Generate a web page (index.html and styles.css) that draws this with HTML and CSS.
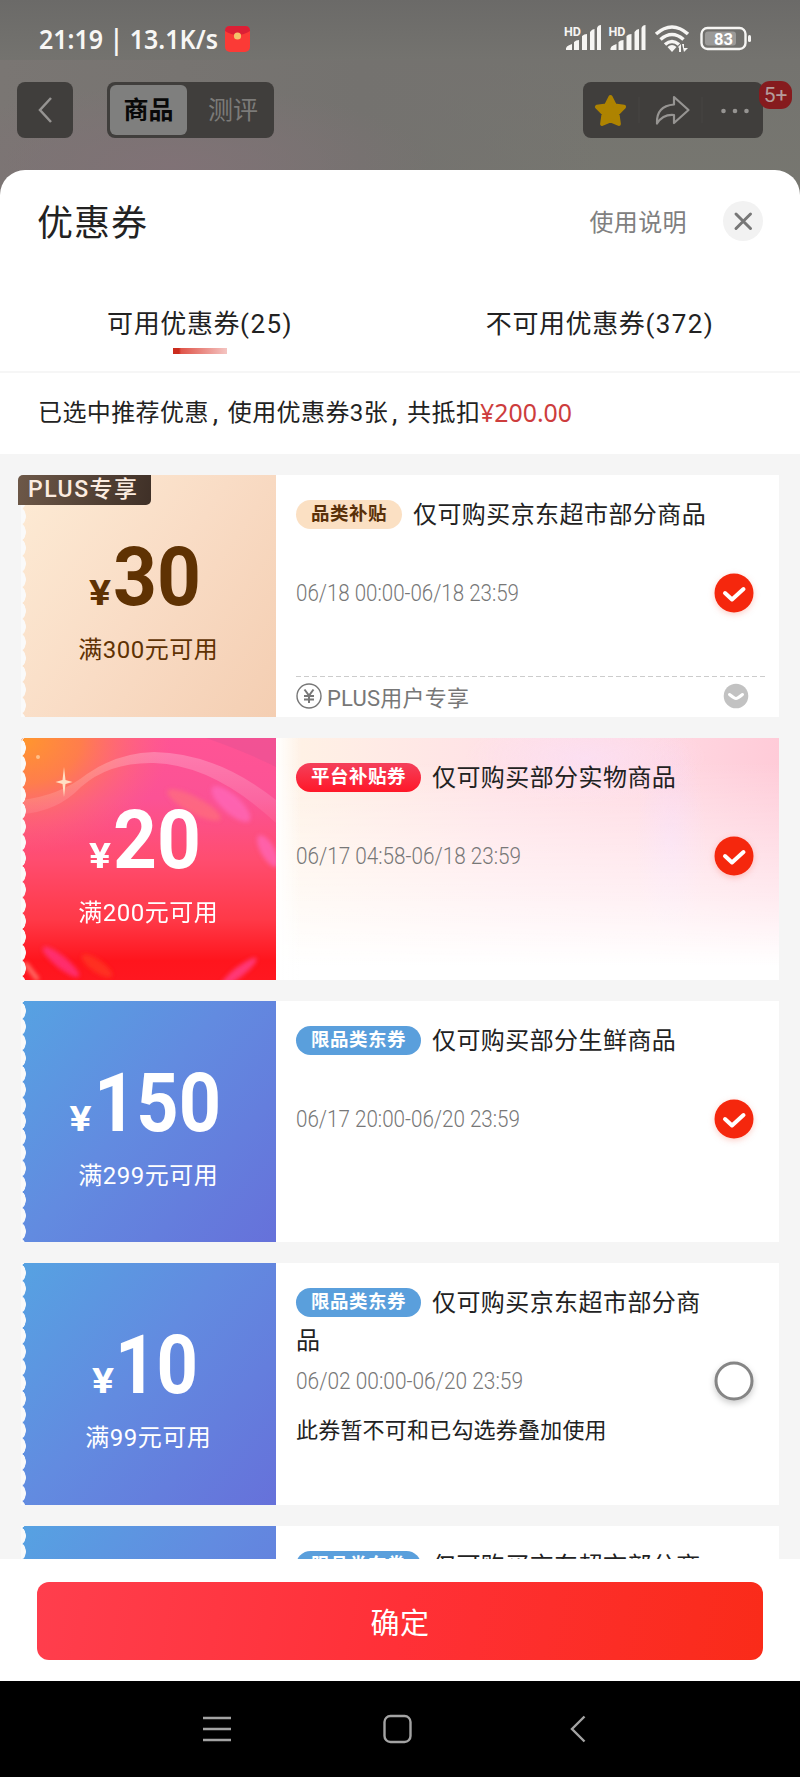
FILE: index.html
```html
<!DOCTYPE html>
<html lang="zh-CN">
<head>
<meta charset="utf-8">
<title>优惠券</title>
<link rel="stylesheet" href="styles.css">
</head>
<body>
<div class="screen">
  <header class="top">
    <div class="status">
      <svg class="clock" width="216" height="40" viewBox="0 0 216 40">
        <text x="-1" y="29" textLength="179" lengthAdjust="spacingAndGlyphs">21:19 | 13.1K/s</text>
        <rect x="185" y="6" width="25" height="26" rx="5" fill="#fb3a36"/>
        <path d="M185 11q0-5 5-5h15q5 0 5 5-12.500 8-25 0z" fill="#dc1f35"/>
        <circle cx="197.500" cy="16" r="3.600" fill="#f4c36a"/>
      </svg>
      <svg class="signals" width="190" height="40" viewBox="0 0 190 40" fill="#f6f5f3">
        <text x="0" y="15.500" class="hd" textLength="17" lengthAdjust="spacingAndGlyphs">HD</text>
        <text x="44.500" y="15.500" class="hd" textLength="17" lengthAdjust="spacingAndGlyphs">HD</text>
        <path id="cell" d="M2 30q-1-4 6-6v6zM10 22q2-2 5-2v10h-5zM18 16q2-2 5-2v16h-5zM26 12q2-3 4.500-3v21H26zM33 8q1-3 4-3v25h-4z"/>
        <use href="#cell" x="44.500"/>
        <g fill="none" stroke="#f6f5f3" stroke-width="3.600">
          <path d="M92 14q16-14 32 0M96.500 19.500q11.500-10 23 0M101 24.500q7-6 14 0"/>
        </g>
        <path d="M103.500 27q4.500-4 9 0l-4.500 5zM114 27l3-3v8h-2v-4zM118 24h2v4h4l-4 4z"/>
        <rect x="137.500" y="8" width="44" height="21" rx="6" fill="none" stroke="#f6f5f3" stroke-width="2.400"/>
        <rect x="141" y="11.500" width="31" height="14" rx="3" fill="#9b9a98"/>
        <rect x="184" y="15" width="3" height="7" rx="1.500"/>
        <text x="150" y="24.500" class="battery" textLength="19" lengthAdjust="spacingAndGlyphs">83</text>
      </svg>
    </div>
    <div class="toolbar">
      <div class="back"><svg width="20" height="30" viewBox="0 0 20 30"><path d="M16 3 5 15l11 12" fill="none" stroke="#969492" stroke-width="2.500"/></svg></div>
      <div class="segments"><span class="segment segment-on">商品</span><span class="segment">测评</span></div>
      <div class="actions">
        <svg width="180" height="56" viewBox="0 0 180 56">
          <path d="M27.500 15l4.300 8.500 9.300 1.300-6.700 6.700 1.500 10.500-8.400-3.500-8.400 3.500 1.500-10.500-6.700-6.700 9.300-1.300z" fill="#ae8300" stroke="#ae8300" stroke-width="4" stroke-linejoin="round"/>
          <path d="M56 15v26M119 15v26" stroke="#464442"/>
          <path d="M91 15l14.500 13-14.500 13v-8q-11-1-17 8.500Q73 24 91 22.500z" fill="none" stroke="#969492" stroke-width="2.200" stroke-linejoin="round"/>
          <g fill="#969492"><circle cx="140.500" cy="29" r="2.300"/><circle cx="152" cy="29" r="2.300"/><circle cx="163.500" cy="29" r="2.300"/></g>
        </svg>
        <span class="badge">5+</span>
      </div>
    </div>
  </header>

  <main class="sheet">
    <div class="heading">
      <h1>优惠券</h1>
      <span class="help">使用说明</span>
      <svg class="close" width="40" height="40" viewBox="0 0 40 40"><circle cx="20" cy="20" r="20" fill="#f2f2f2"/><path d="M13 13l14.500 14.500M27.500 13 13 27.500" stroke="#777" stroke-width="3" stroke-linecap="round"/></svg>
    </div>
    <nav class="tabs">
      <div class="tab tab-on">可用优惠券<span class="count">(25)</span></div>
      <div class="tab">不可用优惠券<span class="count">(372)</span></div>
    </nav>
    <p class="summary">已选中推荐优惠<span class="comma">,</span>使用优惠券3张<span class="comma">,</span>共抵扣<svg class="total" width="94" height="36" viewBox="0 0 94 36"><text x="0" y="27" textLength="92" lengthAdjust="spacingAndGlyphs">¥200.00</text></svg></p>

    <section class="list">
      <article class="coupon">
        <div class="offer offer-plus">
          <span class="plus">PLUS专享</span>
          <svg class="amount" width="254" height="80" viewBox="0 0 254 80"><text class="yen" x="68" y="69" textLength="22" lengthAdjust="spacingAndGlyphs">¥</text><text x="92" y="69" textLength="88" lengthAdjust="spacingAndGlyphs">30</text></svg>
          <span class="limit">满300元可用</span>
        </div>
        <div class="detail">
          <div class="name"><span class="pill pill-plus">品类补贴</span>仅可购买京东超市部分商品</div>
          <div class="period">
            <svg class="date" width="230" height="30" viewBox="0 0 230 30"><text x="0" y="23" textLength="223" lengthAdjust="spacingAndGlyphs">06/18 00:00-06/18 23:59</text></svg>
            <svg class="check" width="52" height="52" viewBox="0 0 52 52"><circle cx="26" cy="26" r="19.500" fill="#f5270d"/><path d="M17 26l7 6.500L35.500 22" fill="none" stroke="#fff" stroke-width="4" stroke-linecap="round" stroke-linejoin="round"/></svg>
          </div>
          <div class="members">
            <svg width="26" height="26" viewBox="0 0 26 26" fill="none" stroke="#777"><circle cx="13" cy="13" r="12" stroke-width="1.400"/><path d="M8.500 6.500l4.500 6 4.500-6M13 12.500V20M8 13h10M8 16.500h10" stroke-width="2"/></svg>
            <span class="members-text">PLUS用户专享</span>
            <svg class="more" width="26" height="26" viewBox="0 0 26 26"><circle cx="13" cy="13" r="12.300" fill="#c2c2c2"/><path d="M6.500 11.500q5 4 6.500 4t6.500-4" fill="none" stroke="#fff" stroke-width="3" stroke-linecap="round"/></svg>
          </div>
        </div>
      </article>

      <article class="coupon coupon-sale">
        <div class="offer offer-sale">
          <svg class="art" width="255" height="242" viewBox="0 0 255 242">
            <defs>
              <linearGradient id="heat" x1="0" y1="0" x2="0" y2="1"><stop offset="0" stop-color="#ff5495"/><stop offset=".25" stop-color="#fb5295"/><stop offset=".5" stop-color="#ff4d70"/><stop offset=".75" stop-color="#ff3948"/><stop offset=".92" stop-color="#ff151d"/><stop offset="1" stop-color="#ff1720"/></linearGradient>
              <radialGradient id="sun" cx="0" cy="0" r="1"><stop offset="0" stop-color="#ff982c"/><stop offset=".4" stop-color="#ff853f" stop-opacity=".85"/><stop offset="1" stop-color="#ff6c77" stop-opacity="0"/></radialGradient>
              <linearGradient id="ring" x1="0" y1="0" x2="0" y2="1"><stop offset="0" stop-color="#fff" stop-opacity=".24"/><stop offset="1" stop-color="#fff" stop-opacity=".06"/></linearGradient>
              <filter id="soft" x="-50%" y="-50%" width="200%" height="200%"><feGaussianBlur stdDeviation="2"/></filter>
            </defs>
            <rect width="255" height="242" fill="url(#heat)"/>
            <rect width="150" height="115" fill="url(#sun)"/>
            <path d="M0 76Q36 74 60 49 88 24 133 25q60 2 122 60V62Q196 15 133 14 96 15 66 36 38 58 0 62z" fill="url(#ring)"/>
            <path d="M185 0q40 14 70 29V0z" fill="#d94f93" opacity=".35"/>
            <g filter="url(#soft)">
              <ellipse cx="173" cy="67" rx="30" ry="8" transform="rotate(28 173 67)" fill="#ff7478" opacity=".6"/>
              <ellipse cx="210" cy="66" rx="25" ry="9" transform="rotate(42 210 66)" fill="#ff6bc0" opacity=".65"/>
              <ellipse cx="247" cy="113" rx="18" ry="7" transform="rotate(60 247 113)" fill="#ff67ba" opacity=".75"/>
              <ellipse cx="40" cy="224" rx="23" ry="6" transform="rotate(39 40 224)" fill="#ff3996" opacity=".65"/>
              <ellipse cx="218" cy="234" rx="22" ry="5" transform="rotate(-38 218 234)" fill="#ff4394" opacity=".75"/>
              <ellipse cx="76" cy="228" rx="18" ry="6" transform="rotate(35 76 228)" fill="#ff5a22" opacity=".4"/>
              <path d="M4 225l13 17" stroke="#ff7b72" stroke-width="4"/>
            </g>
            <path d="M43 29l1.500 13 7 2-7 2L43 59l-1.500-13-7-2 7-2z" fill="#ffe0c4"/>
            <circle cx="17" cy="19" r="2" fill="#ffc08a"/>
          </svg>
          <svg class="amount" width="254" height="80" viewBox="0 0 254 80"><text class="yen" x="68" y="69" textLength="22" lengthAdjust="spacingAndGlyphs">¥</text><text x="92" y="69" textLength="88" lengthAdjust="spacingAndGlyphs">20</text></svg>
          <span class="limit">满200元可用</span>
        </div>
        <div class="detail detail-sale">
          <div class="name"><span class="pill pill-sale">平台补贴券</span>仅可购买部分实物商品</div>
          <div class="period">
            <svg class="date" width="230" height="30" viewBox="0 0 230 30"><text x="0" y="23" textLength="225" lengthAdjust="spacingAndGlyphs">06/17 04:58-06/18 23:59</text></svg>
            <svg class="check" width="52" height="52" viewBox="0 0 52 52"><circle cx="26" cy="26" r="19.500" fill="#f5270d"/><path d="M17 26l7 6.500L35.500 22" fill="none" stroke="#fff" stroke-width="4" stroke-linecap="round" stroke-linejoin="round"/></svg>
          </div>
        </div>
      </article>

      <article class="coupon">
        <div class="offer">
          <svg class="amount" width="254" height="80" viewBox="0 0 254 80"><text class="yen" x="48.500" y="69" textLength="22" lengthAdjust="spacingAndGlyphs">¥</text><text x="73" y="69" textLength="127" lengthAdjust="spacingAndGlyphs">150</text></svg>
          <span class="limit">满299元可用</span>
        </div>
        <div class="detail">
          <div class="name"><span class="pill">限品类东券</span>仅可购买部分生鲜商品</div>
          <div class="period">
            <svg class="date" width="230" height="30" viewBox="0 0 230 30"><text x="0" y="23" textLength="224" lengthAdjust="spacingAndGlyphs">06/17 20:00-06/20 23:59</text></svg>
            <svg class="check" width="52" height="52" viewBox="0 0 52 52"><circle cx="26" cy="26" r="19.500" fill="#f5270d"/><path d="M17 26l7 6.500L35.500 22" fill="none" stroke="#fff" stroke-width="4" stroke-linecap="round" stroke-linejoin="round"/></svg>
          </div>
        </div>
      </article>

      <article class="coupon">
        <div class="offer">
          <svg class="amount" width="254" height="80" viewBox="0 0 254 80"><text class="yen" x="71" y="69" textLength="22" lengthAdjust="spacingAndGlyphs">¥</text><text x="94" y="69" textLength="83" lengthAdjust="spacingAndGlyphs">10</text></svg>
          <span class="limit">满99元可用</span>
        </div>
        <div class="detail">
          <div class="name"><span class="pill">限品类东券</span>仅可购买京东超市部分商品</div>
          <div class="period">
            <svg class="date" width="230" height="30" viewBox="0 0 230 30"><text x="0" y="23" textLength="227" lengthAdjust="spacingAndGlyphs">06/02 00:00-06/20 23:59</text></svg>
            <svg class="check check-off" width="52" height="52" viewBox="0 0 52 52"><circle cx="26" cy="26" r="18" fill="#fff" stroke="#858585" stroke-width="3"/></svg>
          </div>
          <div class="note">此券暂不可和已勾选券叠加使用</div>
        </div>
      </article>

      <article class="coupon">
        <div class="offer"></div>
        <div class="detail">
          <div class="name"><span class="pill">限品类东券</span>仅可购买京东超市部分商</div>
        </div>
      </article>
    </section>

    <footer class="confirm"><button class="submit">确定</button></footer>
  </main>

  <div class="system">
    <svg width="800" height="96" viewBox="0 0 800 96" fill="none" stroke="#a3a3a3" stroke-width="2.400">
      <path d="M203 37h28M203 48h28M203 59h28"/>
      <rect x="384.500" y="35" width="26" height="26" rx="6"/>
      <path d="M584.500 35.500 572 48l12.500 12.500"/>
    </svg>
  </div>
</div>
</body>
</html>
```
FILE: styles.css
```css
* { box-sizing: border-box; }

body {
  margin: 0;
  font-family: Roboto, "Noto Sans CJK SC", sans-serif;
  color: #222;
}

svg { display: block; flex: none; overflow: visible; }

.screen {
  width: 800px;
  height: 1777px;
  display: flex;
  flex-direction: column;
  overflow: hidden;
  background:
    radial-gradient(ellipse 260px 80px at 170px 165px, #807276, transparent),
    linear-gradient(90deg, #7a7673 0, #74726f 45%, transparent 75%) 0 60px / 800px 140px no-repeat,
    linear-gradient(#6b6a68, #74736f 60px, #777770 200px);
}

.top { height: 170px; flex: none; }

.status {
  height: 82px;
  padding: 20px 38px 0 40px;
  display: flex;
  justify-content: space-between;
}
.clock { font: 600 27.500px "Noto Sans", sans-serif; fill: #f8f7f5; }
.signals { margin-right: 8px; }
.hd { font: 700 12px Roboto, sans-serif; }
.battery { font: 700 17px Roboto, sans-serif; fill: #fff; }

.toolbar {
  display: flex;
  padding: 0 37px 0 17px;
  height: 56px;
}
.back {
  width: 56px;
  height: 56px;
  border-radius: 8px;
  background: #403e3c;
  display: grid;
  place-items: center;
}
.segments {
  display: flex;
  width: 167px;
  height: 56px;
  margin-left: 34px;
  padding: 3px;
  border-radius: 8px;
  background: #403e3c;
}
.segment {
  width: 84px;
  padding-left: 8px;
  line-height: 51px;
  text-align: center;
  font-size: 25px;
  color: #7c7b79;
}
.segment-on {
  width: 77px;
  padding-left: 0;
  border-radius: 6px;
  background: #7f7f7e;
  color: #080808;
  font-weight: 700;
}
.actions {
  position: relative;
  width: 180px;
  margin-left: auto;
  border-radius: 8px;
  background: #403e3c;
}
.badge {
  position: absolute;
  right: -29px;
  top: -1px;
  width: 33px;
  height: 28px;
  border-radius: 11px;
  background: #861b1e;
  color: #b59c9b;
  font-size: 21px;
  line-height: 28px;
  text-align: center;
}

.sheet {
  height: 1511px;
  flex: none;
  display: flex;
  flex-direction: column;
  overflow: hidden;
  border-radius: 25px 25px 0 0;
  background: #fff;
}
.heading {
  display: flex;
  align-items: center;
  height: 102px;
  flex: none;
  padding: 0 37px 0 37px;
}
h1 {
  margin: 6px auto 0 0;
  font-size: 36px;
  line-height: 54px;
  font-weight: 400;
  letter-spacing: 1px;
}
.help {
  font-size: 24px;
  letter-spacing: .4px;
  color: #808080;
  margin: 0 36px 2px 0;
}

.tabs {
  display: flex;
  height: 101px;
  flex: none;
  border-bottom: 2px solid #f6f6f6;
}
.tab {
  position: relative;
  width: 400px;
  padding-top: 30px;
  line-height: 44px;
  font-size: 26px;
  letter-spacing: .6px;
  text-align: center;
}
.count { letter-spacing: 1.400px; }
.tab-on::after {
  content: "";
  position: absolute;
  left: 173px;
  top: 76px;
  width: 54px;
  height: 6px;
  background: linear-gradient(90deg, #cb2c1e 0 6px, #e0554a 8px, #f4c5c2);
}

.summary {
  display: flex;
  align-items: center;
  flex: none;
  margin: 0;
  height: 81px;
  padding: 0 0 1px 38px;
  font-size: 24px;
  line-height: 38px;
  letter-spacing: .4px;
}
.comma { width: 19px; padding-left: 4px; font-size: 27px; }
.total { font: 25px "Noto Sans", Roboto, sans-serif; fill: #cd3d3d; letter-spacing: 0; }

.list {
  height: 1105px;
  flex: none;
  overflow: hidden;
  display: flex;
  flex-direction: column;
  gap: 21px;
  padding: 21px 21px 0 18px;
  background: #f5f5f5;
}

.coupon {
  display: flex;
  flex: none;
  height: 241.800px;
  padding-left: 3px;
}
.offer {
  position: relative;
  width: 254.500px;
  flex: none;
  display: flex;
  flex-direction: column;
  align-items: center;
  padding-top: 61px;
  border-radius: 4px 0 0 0;
  background: linear-gradient(130deg, #56a2e2, #628be0 45%, #6671da);
  color: #fff;
}
.offer::before {
  content: "";
  position: absolute;
  left: 0;
  top: 0;
  z-index: 1;
  width: 5px;
  height: 100%;
  background: radial-gradient(ellipse 5px 8.500px at 0 50%, #fafafa 90%, transparent) 0 2px / 5px 15.750px;
}
.offer-plus {
  background: linear-gradient(125deg, #fdebd5, #f9dcc5 50%, #f4ceb2);
  color: #5f3203;
}
.offer-sale { overflow: hidden; }
.art { position: absolute; left: 0; top: 0; }
.amount {
  position: relative;
  font: 700 81px Roboto, sans-serif;
  fill: currentColor;
}
.yen { font-size: 35px; }
.limit {
  position: relative;
  margin-top: 16px;
  line-height: 36px;
  font-size: 24px;
  letter-spacing: .5px;
}

.plus {
  position: absolute;
  left: -3px;
  top: 0;
  z-index: 2;
  width: 133px;
  height: 30px;
  padding-left: 10px;
  border-radius: 5px 0 5px 0;
  background: linear-gradient(100deg, #6d5848, #3f3027);
  color: #fcece0;
  font-size: 23px;
  font-weight: 500;
  line-height: 30px;
  letter-spacing: 1.500px;
  white-space: nowrap;
}

.detail {
  flex: 1;
  display: flex;
  flex-direction: column;
  padding: 21px 12px 0 20.500px;
  background: #fff;
}
.detail-sale {
  background:
    linear-gradient(90deg, #fff 0, transparent 25px),
    linear-gradient(transparent 10%, rgba(255,255,255,.6) 65%, #fff 94%),
    radial-gradient(ellipse 35px 110px at 395px 105px, rgba(245,215,250,.5), transparent),
    radial-gradient(ellipse 120px 45px at 310px 20px, rgba(250,225,250,.6), transparent),
    linear-gradient(90deg, #fff3e5, #ffe1e6 45%, #ffd9e2 75%, #ffcbd8);
}
.name {
  width: 424px;
  height: 76px;
  flex: none;
  font-size: 24px;
  line-height: 38px;
  letter-spacing: .42px;
}
.pill {
  display: inline-block;
  height: 29px;
  padding: 0 15px;
  margin-right: 11px;
  border-radius: 15px;
  background: #5a9fdc;
  color: #fff;
  font-size: 18.500px;
  font-weight: 700;
  line-height: 28px;
  letter-spacing: .5px;
  vertical-align: 3px;
}
.pill-plus { background: #fbe0c3; color: #593009; }
.pill-sale { background: linear-gradient(#f4405b, #ff1728); }
.period {
  display: flex;
  align-items: center;
  justify-content: space-between;
  height: 42px;
  flex: none;
  padding-right: 7px;
}
.date { font: 300 23px Roboto, sans-serif; fill: #777; }
.check { filter: drop-shadow(0 2px 3px rgba(245, 60, 30, .25)); }
.check-off { filter: drop-shadow(0 3px 3px rgba(0, 0, 0, .2)); }
.note { font-size: 22px; line-height: 57px; letter-spacing: .2px; }
.members {
  display: flex;
  align-items: center;
  height: 41px;
  margin-top: auto;
  background: repeating-linear-gradient(90deg, #ccc 0 5px, transparent 5px 8px) 0 0 / 100% 1px no-repeat;
}
.members-text {
  margin-left: 5px;
  font-size: 22px;
  letter-spacing: .2px;
  color: #777;
}
.more { margin: 0 18px 0 auto; }

.confirm {
  flex: none;
  padding: 23px 37px 0;
}
.submit {
  display: block;
  width: 726px;
  height: 78px;
  padding: 0;
  border: 0;
  border-radius: 12px;
  background: linear-gradient(100deg, #ff3e4d, #ff3037 50%, #fa2b19);
  color: #fff;
  font: 29px Roboto, "Noto Sans CJK SC", sans-serif;
  letter-spacing: .5px;
}

.system {
  height: 96px;
  flex: none;
  background: #000;
}
```
